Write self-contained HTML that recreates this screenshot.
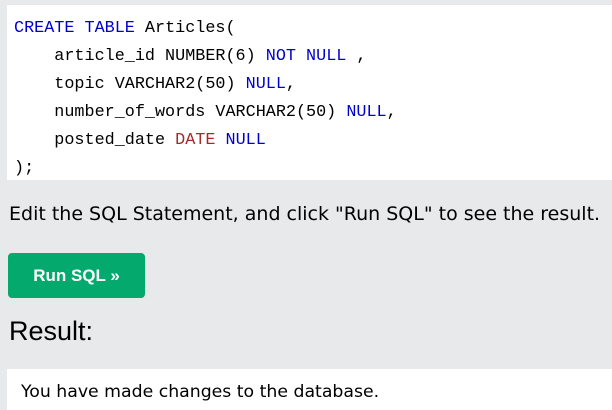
<!DOCTYPE html>
<html><head><style>
body{margin:0;width:612px;height:410px;background:#e7e9eb;overflow:hidden;font-family:"Liberation Sans",sans-serif;position:relative}
.code{position:absolute;left:7px;top:5px;width:605px;height:175px;background:#fff;overflow:hidden}
.code pre{margin:0;position:absolute;left:7px;top:10px;font-family:"Liberation Mono",monospace;font-size:16.8px;line-height:28px;color:#000}
.b{color:#0000cd}.r{color:#a52a2a}
.p{position:absolute;left:9px;top:203px;font-family:"DejaVu Sans",sans-serif;font-size:19px;color:#000;white-space:nowrap}
.btn{position:absolute;left:8px;top:253px;width:137px;height:45px;background:#04aa6d;border-radius:4px;color:#fff;font-weight:bold;font-size:17px;line-height:45px;text-align:center}
.h{position:absolute;left:9px;top:316px;font-size:27px;color:#000}
.res{position:absolute;left:7px;top:369px;width:605px;height:41px;background:#fff}
.res span{position:absolute;left:14px;top:13px;font-family:"DejaVu Sans",sans-serif;font-size:17.3px;color:#000;white-space:nowrap}
</style></head><body>
<div class="code"><pre><span class="b">CREATE TABLE</span> Articles(
    article_id NUMBER(6) <span class="b">NOT NULL</span> ,
    topic VARCHAR2(50) <span class="b">NULL</span>,
    number_of_words VARCHAR2(50) <span class="b">NULL</span>,
    posted_date <span class="r">DATE</span> <span class="b">NULL</span>
);</pre></div>
<div class="p">Edit the SQL Statement, and click "Run SQL" to see the result.</div>
<div class="btn">Run SQL »</div>
<div class="h">Result:</div>
<div class="res"><span>You have made changes to the database.</span></div>
</body></html>
